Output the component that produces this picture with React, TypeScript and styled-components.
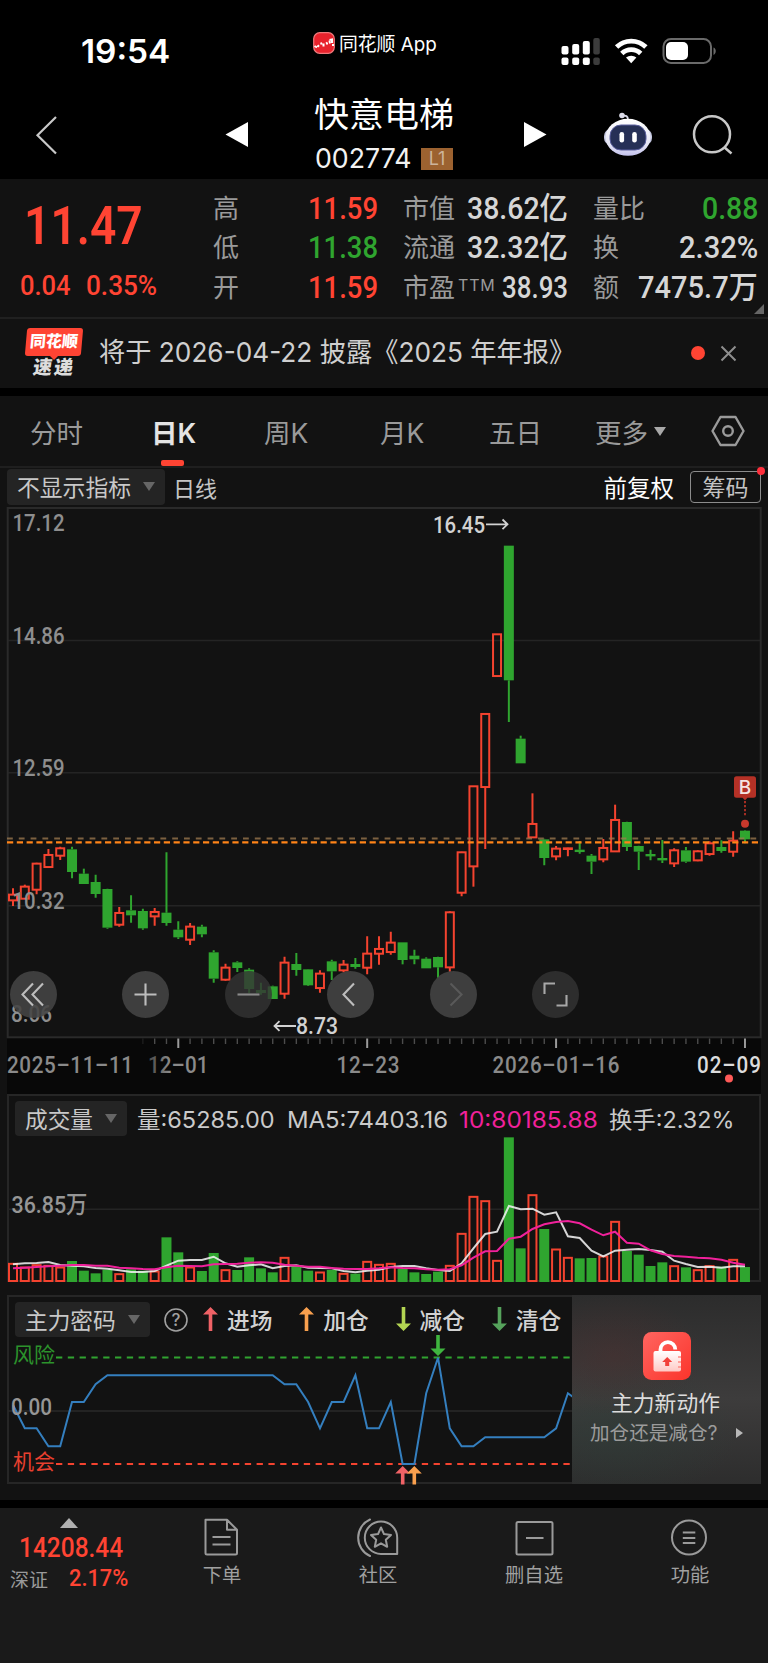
import React, { useLayoutEffect, useRef, useState } from "react";
import styled, { createGlobalStyle } from "styled-components";

const RED = "#ff4433";
const GREEN = "#2fa52f";
const CANDLE_RED = "#f4432f";

const Global = createGlobalStyle`
  * { box-sizing: border-box; }
  body { margin: 0; background: #000; }
  svg { display: block; flex: none; }
  svg text { white-space: pre; }
`;

const cjk = `Inter, "Noto Sans CJK SC", sans-serif`;
const din = `Roboto, "Noto Sans CJK SC", sans-serif`;

/* ---------- text squeezed to a given width ---------- */
const FitBox = styled.span<{ $w: number }>`
  display: inline-block;
  flex: none;
  width: ${(p) => p.$w}px;
  white-space: pre;
`;
const FitInner = styled.span`
  display: inline-block;
  transform-origin: 0 50%;
`;
function Fit({ w, className, children }: { w: number; className?: string; children: React.ReactNode }) {
  const ref = useRef<HTMLSpanElement>(null);
  const [scale, setScale] = useState(1);
  useLayoutEffect(() => {
    if (ref.current && ref.current.offsetWidth) setScale(w / ref.current.offsetWidth);
  }, [w, children]);
  return (
    <FitBox $w={w} className={className}>
      <FitInner ref={ref} style={{ transform: `scaleX(${scale})` }}>
        {children}
      </FitInner>
    </FitBox>
  );
}

/* ---------- page ---------- */
const Page = styled.div`
  width: 768px;
  height: 1663px;
  overflow: hidden;
  background: #121212;
  color: #cfcfcf;
  font-family: ${cjk};
`;

/* ---------- status bar ---------- */
const StatusBar = styled.div`
  height: 90px;
  background: #000;
  display: flex;
  padding-left: 81px;
  color: #fff;
`;
const Clock = styled(Fit)`
  margin-top: 31px;
  font-size: 33px;
  line-height: 41px;
  font-weight: 600;
`;
const AppTag = styled.div`
  display: flex;
  margin: 31px 0 0 143px;
  height: 24px;
  gap: 4px;
  width: 248px;
  align-items: center;
  font-size: 19px;
  line-height: 24px;
`;
const AppName = styled(Fit)`
  margin-top: 3px;
`;
const StatusIcons = styled.div`
  padding-top: 36px;
`;

/* ---------- title ---------- */
const Header = styled.header`
  height: 89px;
  background: #000;
  display: flex;
  align-items: flex-start;
`;
const TitleBlock = styled.div`
  width: 276px;
  display: flex;
  flex-direction: column;
  align-items: center;
  padding-right: 4px;
`;
const StockName = styled(Fit)`
  font-size: 34px;
  line-height: 44px;
  margin-top: 3px;
  color: #fff;
`;
const CodeLine = styled.div`
  display: flex;
  align-items: center;
  gap: 9px;
  margin-top: 4px;
  height: 36px;
  font-size: 27px;
  line-height: 36px;
  color: #f2f2f2;
`;
const LevelBadge = styled.span`
  width: 32px;
  height: 22px;
  background: #9c6230;
  color: #cdb49c;
  font-size: 18px;
  line-height: 22px;
  text-align: center;
`;

/* ---------- quote ---------- */
const Quote = styled.section`
  height: 140px;
  border-bottom: 2px solid #202020;
  display: flex;
  position: relative;
  font-family: ${din};
`;
const PriceCol = styled.div`
  width: 213px;
  padding-top: 15px;
  color: ${RED};
`;
const Price = styled(Fit)`
  display: block;
  margin-left: 24px;
  font-size: 54px;
  line-height: 64px;
  font-weight: 600;
`;
const Change = styled.div`
  display: flex;
  gap: 15px;
  margin: 11px 0 0 20px;
  font-size: 28px;
  line-height: 34px;
  font-weight: 500;
`;
const StatCol = styled.div<{ $w: number; $gap: number }>`
  flex: none;
  width: ${(p) => p.$w}px;
  margin-right: ${(p) => p.$gap}px;
  padding-top: 10px;
`;
const StatRow = styled.div`
  height: 39.6px;
  display: flex;
  align-items: center;
  justify-content: space-between;
`;
const StatLabel = styled.span`
  display: flex;
  font-size: 26px;
  line-height: 40px;
  color: #9a9a9a;
`;
const Sup = styled.span`
  font-family: Inter;
  font-size: 16px;
  line-height: 34px;
  letter-spacing: 0.8px;
  margin-left: 3px;
`;
const StatValue = styled(Fit)<{ $c?: string }>`
  font-size: 31px;
  line-height: 40px;
  font-weight: 500;
  color: ${(p) => p.$c || "#d6d6d6"};
`;
const Corner = styled.i`
  position: absolute;
  right: 4px;
  bottom: 3px;
  border-left: 10px solid transparent;
  border-bottom: 10px solid #666;
`;

/* ---------- news ---------- */
const News = styled.section`
  height: 77px;
  border-bottom: 8px solid #000;
  display: flex;
  align-items: flex-start;
  padding-left: 25px;
`;
const NewsLogo = styled.div`
  width: 58px;
  padding-top: 9px;
  display: flex;
  flex-direction: column;
  align-items: center;
  margin-right: 16px;
`;
const LogoTop = styled.div`
  width: 56px;
  height: 28px;
  border-radius: 3px;
  background: ${RED};
  color: #fff;
  transform: skewX(-5deg);
  font-size: 16px;
  font-weight: 900;
  line-height: 27px;
  text-align: center;
`;
const LogoTip = styled.i`
  border: 4px solid transparent;
  border-top-color: ${RED};
  height: 0;
  margin-bottom: -7px;
`;
const LogoBottom = styled.div`
  color: #ddd;
  transform: skewX(-8deg);
  font-size: 19px;
  font-weight: 900;
  line-height: 22px;
  letter-spacing: 2px;
`;
const NewsText = styled(Fit)`
  font-size: 27px;
  line-height: 40px;
  margin-top: 14px;
  color: #cfcfcf;
`;
const NewsDot = styled.i`
  width: 14px;
  height: 14px;
  border-radius: 7px;
  background: ${RED};
  margin: 27px 15px 0 116px;
`;

/* ---------- tabs ---------- */
const Tabs = styled.nav`
  height: 72px;
  border-bottom: 2px solid #1f1f1f;
  display: grid;
  grid-template-columns: 121px 113px 116px 109px 106px 116px 40px;
  padding-left: 30px;
`;
const Tab = styled.div<{ $on?: boolean }>`
  display: flex;
  align-items: center;
  position: relative;
  gap: 6px;
  height: 70px;
  font-size: 26.5px;
  color: ${(p) => (p.$on ? "#e4e4e4" : "#9a9a9a")};
  font-weight: ${(p) => (p.$on ? 600 : 400)};
`;
const TabBar = styled.i`
  position: absolute;
  left: 10px;
  bottom: 0;
  width: 23px;
  height: 6px;
  border-radius: 2px;
  background: ${RED};
`;
const Caret = styled.i<{ $c?: string }>`
  border: 6px solid transparent;
  border-top: 9px solid ${(p) => p.$c || "#777"};
  border-bottom: 0;
`;

/* ---------- chart toolbar ---------- */
const Toolbar = styled.div`
  height: 39px;
  display: flex;
  align-items: center;
  padding: 0 7px 2px;
  font-size: 22.8px;
  color: #c4c4c4;
`;
const Pill = styled.div<{ $w: number; $h: number }>`
  flex: none;
  width: ${(p) => p.$w}px;
  height: ${(p) => p.$h}px;
  border-radius: 4px;
  background: #242424;
  display: flex;
  align-items: center;
  justify-content: space-between;
  padding: 0 10px 0 10px;
  color: #c8c8c8;
  white-space: nowrap;
`;
const Period = styled.span`
  margin-left: 8px;
  font-size: 22px;
`;
const Adjust = styled.span`
  margin-left: auto;
  margin-right: 16px;
  font-size: 23.5px;
  color: #fff;
`;
const ChipBox = styled.div`
  position: relative;
  width: 71px;
  height: 32px;
  border: 1.5px solid #8c8c8c;
  border-radius: 4px;
  display: flex;
  justify-content: center;
  line-height: 32px;
  font-size: 23px;
`;
const ChipDot = styled.i`
  position: absolute;
  right: -5px;
  top: -5px;
  width: 8px;
  height: 8px;
  border-radius: 4px;
  background: #ff2f3c;
`;

/* ---------- candle chart ---------- */
const KLine = styled.section`
  position: relative;
  height: 587px;
`;
const Round = styled.button<{ $x: number; $dim?: boolean }>`
  position: absolute;
  left: ${(p) => p.$x - 23.5}px;
  top: 464px;
  width: 47px;
  height: 47px;
  padding: 0;
  border: 0;
  border-radius: 50%;
  background: ${(p) => (p.$dim ? "rgba(52,52,52,.8)" : "rgba(68,68,68,.88)")};
`;

/* ---------- sub panels ---------- */
const Panel = styled.section<{ $h: number }>`
  margin: 0 7px;
  height: ${(p) => p.$h}px;
  box-shadow: inset 0 0 0 2px #262626;
`;
const PanelHead = styled.div<{ $h: number }>`
  height: ${(p) => p.$h}px;
  display: flex;
  padding: 7px 0 0 8px;
  align-items: flex-start;
  font-size: 22.7px;
`;
const Metric = styled(Fit)<{ $gap: number; $c?: string }>`
  margin-left: ${(p) => p.$gap}px;
  font-size: 23px;
  line-height: 38px;
  color: ${(p) => p.$c || "#cacaca"};
`;
const ForcePanel = styled(Panel)`
  margin-top: 13px;
  display: flex;
`;
const ForceMain = styled.div`
  width: 565px;
`;
const Legend = styled.span`
  display: flex;
  flex: none;
  width: 96.3px;
  gap: 9px;
  height: 34px;
  align-items: center;
  font-weight: 500;
  white-space: nowrap;
  color: #d2d2d2;
`;
const Legends = styled.div`
  display: flex;
  flex: none;
  margin-left: 14px;
`;
const ForceCard = styled.div`
  width: 189px;
  padding-top: 37px;
  display: flex;
  flex-direction: column;
  align-items: center;
  background:
    radial-gradient(ellipse 90px 60px at 22% 32%, rgba(80, 46, 46, 0.42), transparent),
    radial-gradient(ellipse 120px 70px at 25% 72%, rgba(44, 62, 56, 0.5), transparent),
    linear-gradient(180deg, #2c2c2c, #3d3c3c 55%, #2d2d2d);
`;
const CardTitle = styled.div`
  margin-top: 6px;
  font-size: 21.8px;
  line-height: 34px;
  color: #dcdcdc;
  padding-right: 2px;
`;
const CardSub = styled.div`
  display: flex;
  align-items: center;
  width: 189px;
  margin-top: 1px;
  padding-left: 18px;
  font-size: 19.6px;
  line-height: 24px;
  color: #9c9c9c;
`;
const Play = styled.i`
  margin-left: 18px;
  border: 5.5px solid transparent;
  border-left: 7px solid #b8b8b8;
  border-right: 0;
`;

/* ---------- bottom ---------- */
const Footer = styled.footer`
  margin-top: 16px;
  border-top: 8px solid #000;
  height: 163px;
  background: #1a1a1a;
  display: flex;
`;
const IndexBox = styled.div`
  flex: none;
  width: 144px;
  font-family: ${din};
  font-weight: 500;
  color: ${RED};
`;
const UpMark = styled.i`
  display: block;
  width: 0;
  margin: 10px 0 0 60px;
  border: 9px solid transparent;
  border-bottom: 10px solid #b0b0b0;
  border-top: 0;
`;
const IndexValue = styled(Fit)`
  display: block;
  margin: 3px 0 0 18.5px;
  font-size: 28px;
  line-height: 34px;
`;
const IndexLine = styled.div`
  display: flex;
  align-items: center;
  height: 32px;
  margin: -3px 0 0 10px;
  gap: 21px;
  font-size: 24px;
`;
const IndexName = styled.span`
  font-size: 19px;
  font-weight: 400;
  color: #9a9a9a;
`;
const NavItem = styled.div`
  flex: none;
  width: 156px;
  padding-top: 8px;
  display: flex;
  flex-direction: column;
  align-items: center;
  font-size: 19.3px;
  line-height: 26px;
  color: #a0a0a0;
  svg { margin-bottom: 4px; }
`;

/* ---------- data: [up, high, top, bottom, low] ---------- */
type Candle = [number, number, number, number, number];
const early: Candle[] = [
  [1, 265, 283, 302, 318], [1, 254, 259, 297, 297], [1, 188, 190, 270, 283], [1, 147, 164, 202, 202],
  [1, 140, 144, 168, 180], [0, 140, 148, 216, 235], [0, 206, 221, 252, 252], [0, 224, 246, 282, 293],
  [0, 266, 267, 383, 386], [1, 321, 338, 375, 380], [0, 286, 331, 346, 368], [0, 326, 333, 385, 389],
  [1, 324, 335, 350, 377], [0, 157, 338, 369, 377], [0, 364, 389, 412, 417], [1, 369, 379, 420, 435],
  [0, 374, 380, 403, 412], [0, 451, 457, 536, 548], [1, 491, 502, 540, 542], [0, 484, 487, 504, 516],
  [0, 505, 509, 567, 580], [0, 548, 570, 579, 584], [0, 557, 559, 597, 597], [1, 470, 487, 582, 596],
  [0, 459, 492, 510, 527], [0, 507, 508, 556, 558], [1, 511, 520, 565, 578], [0, 479, 484, 514, 540],
  [1, 480, 493, 512, 517], [0, 474, 492, 501, 506], [1, 409, 460, 504, 523], [1, 409, 446, 462, 494],
];
const late: Candle[] = [
  [1, 425, 457, 487, 494], [0, 457, 457, 510, 523], [0, 479, 497, 508, 523], [0, 502, 506, 535, 535],
  [0, 500, 501, 532, 563], [1, 364, 366, 533, 545], [1, 185, 186, 309, 319], [1, -12, -12, 230, 290],
  [1, -229, -229, -8, 177], [1, -468, -468, -341, -341], [0, -733, -733, -329, -204], [0, -163, -154, -80, -80],
  [1, 10, 101, 143, 143], [0, 146, 148, 204, 226], [1, 168, 175, 200, 211], [1, 171, 172, 180, 199],
  [0, 153, 179, 186, 191], [0, 192, 197, 215, 252], [1, 147, 173, 209, 217], [1, 44, 89, 185, 185],
  [0, 95, 96, 171, 183], [0, 167, 168, 185, 240], [0, 179, 192, 198, 211], [0, 150, 204, 211, 219],
  [1, 175, 180, 221, 231], [0, 171, 181, 215, 218], [1, 181, 183, 212, 214], [1, 154, 159, 193, 197],
  [0, 151, 171, 183, 188], [1, 124, 151, 186, 200], [0, 121, 122, 148, 160],
];
const shift = (base: number) => ([u, ...v]: Candle) => [u, ...v.map((n) => base + n / 3)] as Candle;
const candles = [...early.map(shift(800)), ...late.map(shift(790))];
const xAt = (i: number) => 13 + i * 11.806;

const volumes = [
  535, 546, 539, 541, 546, 528, 557, 565, 554, 566, 553, 557, 558, 457, 502, 546, 558, 504, 554, 555, 517, 550, 562,
  517, 544, 557, 561, 555, 565, 566, 529, 538, 535, 551, 562, 567, 560, 541, 445, 334, 347, 526, 157, 490, 329, 432,
  492, 517, 520, 519, 513, 409, 498, 509, 543, 532, 542, 547, 554, 542, 545, 523, 546,
];
const ma5 = [
  538, 535, 534, 531, 540, 542, 544, 549, 551, 556, 561, 561, 558, 542, 527, 525, 525, 515, 535, 545, 541, 538, 550,
  543, 541, 548, 549, 550, 558, 562, 557, 554, 546, 543, 543, 550, 555, 558, 535, 490, 447, 440, 363, 373, 371, 389,
  382, 454, 459, 497, 514, 497, 494, 492, 495, 500, 527, 537, 546, 545, 548, 544, 544,
];
const ma10 = [
  550, 548, 546, 544, 542, 540, 540, 542, 542, 548, 550, 552, 553, 547, 542, 543, 544, 538, 537, 536, 533, 532, 533,
  539, 542, 545, 545, 549, 551, 552, 552, 550, 547, 549, 550, 553, 554, 553, 541, 518, 499, 498, 461, 455, 432, 418,
  411, 408, 415, 434, 451, 440, 473, 476, 496, 507, 513, 515, 518, 520, 524, 533, 539,
];
const force = [
  345, 415, 415, 469, 469, 336, 336, 283, 256, 256, 256, 256, 256, 256, 256, 256, 256, 256, 256, 256, 256, 256, 256,
  283, 283, 336, 415, 336, 336, 256, 415, 415, 336, 522, 522, 310, 203, 415, 469, 469, 442, 442, 442, 442, 442, 442,
  415, 310, 336,
];
const line = (v: number[], base: number) => v.map((z, i) => `${xAt(i).toFixed(1)},${(base + z / 3).toFixed(1)}`).join(" ");

function Lbl({ x, y, w, c = "#8e8e8e", size = 24, children }: { x: number; y: number; w: number; c?: string; size?: number; children: string }) {
  return (
    <text x={x} y={y} fill={c} fontSize={size} fontWeight={500} fontFamily={din} textLength={w} lengthAdjust="spacingAndGlyphs">
      {children}
    </text>
  );
}

/* axis dates: narrow digits with open tracking */
function DateLabel({ x, w, c = "#8a8a8a", children }: { x: number; w: number; c?: string; children: string }) {
  const k = 0.86;
  return (
    <text transform={`translate(${x} 1073) scale(${k} 1)`} fill={c} fontSize={24} fontWeight={500} fontFamily={din} textLength={w / k} lengthAdjust="spacing">
      {children.replace(/-/g, "–")}
    </text>
  );
}

function CandleChart() {
  return (
    <svg width="768" height="587" viewBox="0 507 768 587">
      <defs>
        <linearGradient id="fade" x1="0" x2="1">
          <stop offset="0" stopColor="#080808" stopOpacity=".7" />
          <stop offset="1" stopColor="#080808" stopOpacity="0" />
        </linearGradient>
      </defs>
      <rect x="7" y="1038" width="754" height="56" fill="#080808" />
      {[640.5, 772.7, 905.7].map((y) => (
        <line key={y} x1="8" x2="760" y1={y} y2={y} stroke="#242424" strokeWidth="1.5" />
      ))}
      <rect x="7.7" y="508" width="753" height="529.3" fill="none" stroke="#2a2a2a" strokeWidth="2" />
      {candles.map(([up, hi, top, bot, lo], i) => {
        const x = xAt(i);
        const c = up ? CANDLE_RED : GREEN;
        const flat = bot - top < 4;
        return (
          <g key={i}>
            <path d={`M${x} ${hi}V${top}M${x} ${bot}V${lo}`} stroke={c} strokeWidth="2" />
            {up && !flat ? (
              <rect x={x - 4} y={top + 0.3} width="8" height={bot - top - 0.6} fill="none" stroke={c} strokeWidth="2" />
            ) : (
              <rect x={x - 5} y={top} width="10" height={Math.max(bot - top, 2.4)} fill={c} />
            )}
          </g>
        );
      })}
      <line x1="7" x2="761" y1="838.4" y2="838.4" stroke="#a07c50" strokeOpacity=".75" strokeWidth="2" strokeDasharray="5.8 6" />
      <line x1="7" x2="761" y1="842.4" y2="842.4" stroke="#ff8418" strokeWidth="2.2" strokeDasharray="6.2 3.6" />
      <Lbl x={12.5} y={531} w={52}>17.12</Lbl>
      <Lbl x={12.5} y={643.7} w={52}>14.86</Lbl>
      <Lbl x={12.5} y={776} w={52}>12.59</Lbl>
      <Lbl x={12.5} y={908.7} w={52}>10.32</Lbl>
      <Lbl x={11} y={1021.5} w={41}>8.06</Lbl>
      <Lbl x={433} y={532.7} w={52} c="#d2d2d2">16.45</Lbl>
      <path d="M486 524.3h21.5M502.5 519.5l5 4.8-5 4.8" fill="none" stroke="#d2d2d2" strokeWidth="1.8" />
      <Lbl x={296} y={1034.3} w={42} c="#d2d2d2">8.73</Lbl>
      <path d="M296 1026h-21.5M279.5 1021.2l-5 4.8 5 4.8" fill="none" stroke="#d2d2d2" strokeWidth="1.8" />
      {candles.map((_, i) => {
        const major = i % 16 === 14;
        return i < 11 ? null : (
          <line key={i} x1={xAt(i)} x2={xAt(i)} y1="1038.5" y2={major ? 1048 : 1044} stroke={major ? "#9a9a9a" : "#4c4c4c"} strokeWidth={major ? 2 : 1.4} opacity={i === 11 ? 0.3 : 1} />
        );
      })}
      <DateLabel x={148} w={60.5}>12-01</DateLabel>
      <rect x="140" y="1050" width="30" height="28" fill="url(#fade)" />
      <DateLabel x={7} w={126}>2025-11-11</DateLabel>
      <DateLabel x={336.5} w={63}>12-23</DateLabel>
      <DateLabel x={492.5} w={127}>2026-01-16</DateLabel>
      <DateLabel x={697} w={64} c="#dcdcdc">02-09</DateLabel>
      <circle cx="729" cy="1078.5" r="4" fill="#ff5a58" />
      <path d="M736.5 776.3h17a2.5 2.5 0 0 1 2.5 2.5v16.5a2.5 2.5 0 0 1-2.5 2.5h-6l-2.5 2.5-2.5-2.5h-6a2.5 2.5 0 0 1-2.5-2.5v-16.5a2.5 2.5 0 0 1 2.5-2.5z" fill="#b53126" />
      <text x="745" y="794.2" fill="#f4e4e2" fontSize="19" fontWeight="500" fontFamily="Inter" textAnchor="middle">B</text>
      <line x1="745" x2="745" y1="801" y2="817" stroke="#b53126" strokeWidth="1.8" strokeDasharray="2.2 1.8" />
      <circle cx="745" cy="823.7" r="4" fill="#c9382c" />
    </svg>
  );
}

function Glyph({ d, c = "#bdbdbd" }: { d: string; c?: string }) {
  return (
    <svg width="47" height="47" viewBox="0 0 47 47" fill="none" stroke={c} strokeWidth="2.1">
      <path d={d} />
    </svg>
  );
}

function Arrow({ x, y, up, c, h = 24 }: { x: number; y: number; up?: boolean; c: string; h?: number }) {
  const d = up
    ? `M${x} ${y}l7.5 7.5h-5.7v${h - 7.5}h-3.6v-${h - 7.5}h-5.7z`
    : `M${x} ${y + h}l7.5-7.5h-5.7v-${h - 7.5}h-3.6v${h - 7.5}h-5.7z`;
  return <path d={d} fill={c} />;
}

const legends = [
  { t: "进场", c: "#f06266", up: true },
  { t: "加仓", c: "#f9a04e", up: true },
  { t: "减仓", c: "#b3d552", up: false },
  { t: "清仓", c: "#56a35c", up: false },
];

const CloseIcon = styled.svg`
  margin-top: 26px;
`;
const HelpIcon = styled.svg`
  margin-left: 13px;
`;

export default function App() {
  return (
    <Page>
      <Global />
      <StatusBar>
        <Clock w={89}>19:54</Clock>
        <AppTag>
          <svg width="22" height="22" viewBox="0 0 22 22">
            <rect x=".7" y=".7" width="20.6" height="20.6" rx="6" fill="#e8222c" stroke="#f07a7c" strokeWidth="1.2" />
            <path d="M1.5 14l2.500 1.500M4.500 14.800l1.500-1.500M8 10.500l.6 2M10.500 11.500v3M13 11.500l1.500-1M14 12.500v-1.500M16.500 8l2.500-.5v3.500M17 11.500l-.5-3M20 12v2" fill="none" stroke="#fff" strokeWidth="2" />
          </svg>
          <AppName w={98}>同花顺 App</AppName>
        </AppTag>
        <StatusIcons>
          <svg width="160" height="30" viewBox="561 36 160 30">
            <g fill="#fff">
              <rect x="561.5" y="46" width="7" height="8.5" rx="2" />
              <rect x="572.2" y="44" width="7" height="10.5" rx="2" />
              <rect x="582.8" y="41" width="7" height="13.5" rx="2" />
              <rect x="561.5" y="57.5" width="7" height="7.5" rx="2" />
              <rect x="572.2" y="57.5" width="7" height="7.5" rx="2" />
              <rect x="582.8" y="57.5" width="7" height="7.5" rx="2" />
            </g>
            <rect x="593.3" y="38" width="6.5" height="16.5" rx="2" fill="#3c3c3c" />
            <rect x="593.3" y="57.5" width="6.5" height="7.5" rx="2" fill="#3c3c3c" />
            <g fill="none" stroke="#fff" strokeWidth="4.8">
              <path d="M616.6 47a21 21 0 0 1 29.3 0" />
              <path d="M621.8 53.500a13.500 13.500 0 0 1 18.900 0" />
            </g>
            <path d="M631.2 63.300l-5.200-5.700a8 8 0 0 1 10.400 0z" fill="#fff" />
            <rect x="663.5" y="39" width="47.5" height="24" rx="7.5" fill="none" stroke="#6a6a6a" strokeWidth="2" />
            <rect x="666" y="42" width="22" height="18" rx="5" fill="#fff" />
            <path d="M713.5 47.500c3 1 3 6 0 7.500z" fill="#6a6a6a" />
          </svg>
        </StatusIcons>
      </StatusBar>

      <Header>
        <svg width="248" height="89" viewBox="0 90 248 89">
          <path d="M56 117L37.5 135.2 56 153.500" fill="none" stroke="#c8c8c8" strokeWidth="2.2" />
          <path d="M248 122v25l-22.500-12.500z" fill="#fff" />
        </svg>
        <TitleBlock>
          <StockName w={140}>快意电梯</StockName>
          <CodeLine>
            <Fit w={97}>002774</Fit>
            <LevelBadge>L1</LevelBadge>
          </CodeLine>
        </TitleBlock>
        <svg width="244" height="89" viewBox="524 90 244 89">
          <defs>
            <linearGradient id="bot" x1="0" y1="0" x2="0" y2="1">
              <stop offset="0" stopColor="#fff" />
              <stop offset=".7" stopColor="#e4e4f4" />
              <stop offset="1" stopColor="#c4c2ee" />
            </linearGradient>
          </defs>
          <path d="M524 122v25l22.500-12.500z" fill="#fff" />
          <circle cx="622" cy="115.5" r="2.8" fill="#ddddea" />
          <path d="M622 116c4-1 6 0 6 4" fill="none" stroke="#d8d8e8" strokeWidth="1.8" />
          <rect x="604" y="129" width="48" height="16" rx="7" fill="#c3c6e0" />
          <ellipse cx="628" cy="137.3" rx="22.5" ry="18.5" fill="url(#bot)" />
          <rect x="610" y="125" width="36" height="25" rx="11" fill="#263056" stroke="#5a5f9e" strokeWidth="1" />
          <rect x="619.5" y="132" width="4.6" height="10.5" rx="2.3" fill="#fff" />
          <rect x="632.2" y="132" width="4.6" height="10.5" rx="2.3" fill="#fff" />
          <circle cx="712" cy="134.3" r="18" fill="none" stroke="#c8c8c8" strokeWidth="2.5" />
          <path d="M724 147l7.500 6.500" stroke="#c8c8c8" strokeWidth="2.5" />
        </svg>
      </Header>

      <Quote>
        <PriceCol>
          <Price w={119}>11.47</Price>
          <Change>
            <Fit w={51}>0.04</Fit>
            <Fit w={71}>0.35%</Fit>
          </Change>
        </PriceCol>
        <StatCol $w={165} $gap={25}>
          <StatRow><StatLabel>高</StatLabel><StatValue w={70} $c={RED}>11.59</StatValue></StatRow>
          <StatRow><StatLabel>低</StatLabel><StatValue w={70} $c={GREEN}>11.38</StatValue></StatRow>
          <StatRow><StatLabel>开</StatLabel><StatValue w={70} $c={RED}>11.59</StatValue></StatRow>
        </StatCol>
        <StatCol $w={165} $gap={25}>
          <StatRow><StatLabel>市值</StatLabel><StatValue w={101}>38.62亿</StatValue></StatRow>
          <StatRow><StatLabel>流通</StatLabel><StatValue w={101}>32.32亿</StatValue></StatRow>
          <StatRow><StatLabel>市盈<Sup>TTM</Sup></StatLabel><StatValue w={66}>38.93</StatValue></StatRow>
        </StatCol>
        <StatCol $w={165} $gap={0}>
          <StatRow><StatLabel>量比</StatLabel><StatValue w={56} $c={GREEN}>0.88</StatValue></StatRow>
          <StatRow><StatLabel>换</StatLabel><StatValue w={79}>2.32%</StatValue></StatRow>
          <StatRow><StatLabel>额</StatLabel><StatValue w={120}>7475.7万</StatValue></StatRow>
        </StatCol>
        <Corner />
      </Quote>

      <News>
        <NewsLogo>
          <LogoTop>同花顺</LogoTop>
          <LogoTip />
          <LogoBottom>速递</LogoBottom>
        </NewsLogo>
        <NewsText w={476}>{"将于 2026-04-22 披露《2025 年年报》"}</NewsText>
        <NewsDot />
        <CloseIcon width="17" height="17" viewBox="0 0 17 17">
          <path d="M1.500 1.500l14 14M15.500 1.500l-14 14" stroke="#8e8e8e" strokeWidth="2" />
        </CloseIcon>
      </News>

      <Tabs>
        <Tab>分时</Tab>
        <Tab $on>日K<TabBar /></Tab>
        <Tab>周K</Tab>
        <Tab>月K</Tab>
        <Tab>五日</Tab>
        <Tab>更多<Caret $c="#a8a8a8" /></Tab>
        <Tab>
          <svg width="34" height="32" viewBox="0 0 34 32" fill="none" stroke="#9a9a9a" strokeWidth="2.4" strokeLinejoin="round">
            <path d="M9.500 2h15L32.500 16l-8 14h-15L1.500 16z" />
            <circle cx="17" cy="16" r="4.8" />
          </svg>
        </Tab>
      </Tabs>

      <Toolbar>
        <Pill $w={158} $h={36}>不显示指标<Caret $c="#666" /></Pill>
        <Period>日线</Period>
        <Adjust>前复权</Adjust>
        <ChipBox>筹码<ChipDot /></ChipBox>
      </Toolbar>

      <KLine>
        <CandleChart />
        <Round $x={33.7}><Glyph d="M23 12.500L12.500 23.500 23 34.500M33 12.500L22.500 23.500 33 34.500" /></Round>
        <Round $x={145.7}><Glyph d="M12.500 23.500h22M23.500 12.500v22" /></Round>
        <Round $x={248} $dim><Glyph d="M12.500 23.500h22" c="#8a8a8a" /></Round>
        <Round $x={350.3}><Glyph d="M27 12.500L16.500 23.500 27 34.500" /></Round>
        <Round $x={453}><Glyph d="M20.500 12.500L31.500 23.500 20.500 34.500" c="#595959" /></Round>
        <Round $x={555.3} $dim><Glyph d="M23 12.500h-10.500v10.500M24.500 34.500h10v-10.500" c="#a8a8a8" /></Round>
      </KLine>

      <Panel $h={188}>
        <PanelHead $h={43}>
          <Pill $w={112} $h={35}>成交量<Caret $c="#666" /></Pill>
          <Metric w={138} $gap={10}>量:65285.00</Metric>
          <Metric w={161} $gap={11.500}>MA5:74403.16</Metric>
          <Metric w={139} $gap={11} $c="#f0219b">10:80185.88</Metric>
          <Metric w={125} $gap={11}>换手:2.32%</Metric>
        </PanelHead>
        <svg width="754" height="145" viewBox="7 1137 754 145">
          <line x1="8" x2="760" y1="1209.3" y2="1209.3" stroke="#242424" strokeWidth="1.5" />
          {volumes.map((z, i) => {
            const y = 1085 + z / 3;
            return candles[i][0] ? (
              <rect key={i} x={xAt(i) - 4} y={y + 0.5} width="8" height={1281 - y - 0.5} fill="none" stroke={CANDLE_RED} strokeWidth="2" />
            ) : (
              <rect key={i} x={xAt(i) - 5} y={y} width="10" height={1282 - y} fill={GREEN} />
            );
          })}
          <polyline points={line(ma5, 1085)} fill="none" stroke="#f0f0f0" strokeOpacity=".88" strokeWidth="2" />
          <polyline points={line(ma10, 1085)} fill="none" stroke="#f0219b" strokeWidth="2" />
          <Lbl x={11.5} y={1213} w={76} c="#969696">36.85万</Lbl>
        </svg>
      </Panel>

      <ForcePanel $h={189}>
        <ForceMain>
          <PanelHead $h={45}>
            <Pill $w={135} $h={35}>主力密码<Caret $c="#666" /></Pill>
            <HelpIcon width="26" height="36" viewBox="0 0 26 36">
              <circle cx="13" cy="18" r="11" fill="none" stroke="#a0a0a0" strokeWidth="1.6" />
              <text x="13" y="24" fill="#a0a0a0" fontSize="17" fontWeight="500" fontFamily="Inter" textAnchor="middle">?</text>
            </HelpIcon>
            <Legends>
              {legends.map((l) => (
                <Legend key={l.t}>
                  <svg width="15" height="24" viewBox="0 0 15 24">
                    <Arrow x={7.5} y={0} up={l.up} c={l.c} />
                  </svg>
                  {l.t}
                </Legend>
              ))}
            </Legends>
          </PanelHead>
          <svg width="565" height="144" viewBox="7 1340 565 144" overflow="visible">
            <line x1="8" x2="572" y1="1411" y2="1411" stroke="#2a2a2a" strokeWidth="1.5" />
            <line x1="56" x2="571" y1="1357.5" y2="1357.5" stroke="#30a330" strokeWidth="2" strokeDasharray="6.3 5.5" />
            <line x1="56" x2="571" y1="1464" y2="1464" stroke={CANDLE_RED} strokeWidth="2" strokeDasharray="6.3 5.5" />
            <text x="13" y="1362" fill="#2c932c" fontSize="21" fontFamily="Noto Sans CJK SC">风险</text>
            <text x="13" y="1469" fill="#e8402f" fontSize="21" fontFamily="Noto Sans CJK SC">机会</text>
            <clipPath id="plot"><rect x="7" y="1330" width="565" height="160" /></clipPath>
            <polyline clipPath="url(#plot)" points={line(force, 1290)} fill="none" stroke="#347fbf" strokeWidth="2" />
            <Lbl x={11} y={1414.5} w={41} c="#969696">0.00</Lbl>
            <Arrow x={438} y={1335} c="#3fb53f" h={21} />
            <Arrow x={402.7} y={1466} up c="#f06266" h={18.5} />
            <Arrow x={414.3} y={1466} up c="#f9a04e" h={18.5} />
          </svg>
        </ForceMain>
        <ForceCard>
          <svg width="48" height="48" viewBox="0 0 48 48">
            <defs>
              <linearGradient id="lock" x1="0" y1="0" x2="1" y2="1">
                <stop offset="0" stopColor="#ff6560" />
                <stop offset="1" stopColor="#fb342b" />
              </linearGradient>
              <linearGradient id="body" x1="0" y1="0" x2="0" y2="1">
                <stop offset="0" stopColor="#fff" />
                <stop offset="1" stopColor="#ffc9c5" />
              </linearGradient>
            </defs>
            <rect width="48" height="48" rx="8.5" fill="url(#lock)" />
            <path d="M17.500 20v-2.500a7.400 7.400 0 0 1 14.800 0" fill="none" stroke="#fff" strokeWidth="3.8" />
            <rect x="10.5" y="19" width="27.5" height="20.5" rx="2" fill="url(#body)" />
            <path d="M24.200 25l5 5h-3v4h-4v-4h-3z" fill="#f2403a" />
            <path d="M35 25h3M35 30h3M35 35h3" stroke="#ff8a84" strokeWidth="1.5" />
          </svg>
          <CardTitle>主力新动作</CardTitle>
          <CardSub><Fit w={128}>加仓还是减仓?</Fit><Play /></CardSub>
        </ForceCard>
      </ForcePanel>

      <Footer>
        <IndexBox>
          <UpMark />
          <IndexValue w={104}>14208.44</IndexValue>
          <IndexLine>
            <IndexName>深证</IndexName>
            <Fit w={59}>2.17%</Fit>
          </IndexLine>
        </IndexBox>
        <NavItem>
          <svg width="40" height="42" viewBox="0 0 40 42" fill="none" stroke="#9a9a9a" strokeWidth="2" strokeLinejoin="round">
            <path d="M3.500 3.800h21.500l10 10v23.200q0 1.500-1.500 1.500H5q-1.500 0-1.500-1.500z M25 3.800v10h10" />
            <path d="M10.500 21h18M10.500 28.500h18" />
          </svg>
          下单
        </NavItem>
        <NavItem>
          <svg width="42" height="42" viewBox="0 0 42 42" fill="none" stroke="#9a9a9a" strokeWidth="2" strokeLinejoin="round" strokeLinecap="round">
            <path d="M24 5.500a16.200 16.200 0 0 0 0 32.400h16.200v-16.200A16.200 16.200 0 0 0 24 5.500z" />
            <path d="M13 3.500a20 20 0 0 0 0 36.500" />
            <path d="M24 11.500l3 6.600 7 .8-5.200 4.900 1.400 7-6.200-3.500-6.200 3.500 1.400-7-5.200-4.900 7-.8z" />
          </svg>
          社区
        </NavItem>
        <NavItem>
          <svg width="40" height="42" viewBox="0 0 40 42" fill="none" stroke="#9a9a9a" strokeWidth="2">
            <rect x="2.5" y="6" width="36" height="32.5" rx="1.5" />
            <path d="M12 22h17.500" />
          </svg>
          删自选
        </NavItem>
        <NavItem>
          <svg width="40" height="42" viewBox="0 0 40 42" fill="none" stroke="#9a9a9a" strokeWidth="2">
            <circle cx="19" cy="21.5" r="17" />
            <path d="M12.800 16.500h12.500M12.800 22h12.500M12.800 27h12.500" />
          </svg>
          功能
        </NavItem>
      </Footer>
    </Page>
  );
}
